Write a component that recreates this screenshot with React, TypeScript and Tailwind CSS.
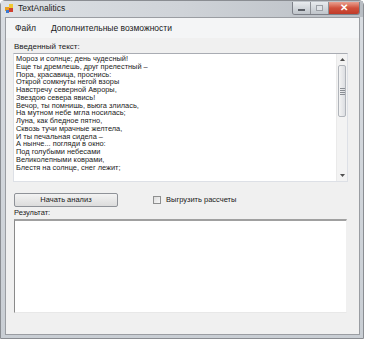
import React from 'react';

const poem = [
  'Мороз и солнце; день чудесный!',
  'Еще ты дремлешь, друг прелестный –',
  'Пора, красавица, проснись:',
  'Открой сомкнуты негой взоры',
  'Навстречу северной Авроры,',
  'Звездою севера явись!',
  'Вечор, ты помнишь, вьюга злилась,',
  'На мутном небе мгла носилась;',
  'Луна, как бледное пятно,',
  'Сквозь тучи мрачные желтела,',
  'И ты печальная сидела –',
  'А нынче... погляди в окно:',
  'Под голубыми небесами',
  'Великолепными коврами,',
  'Блестя на солнце, снег лежит;',
];

function AppIcon() {
  return (
    <svg width="9" height="9" viewBox="0 0 9 9">
      <rect x="0" y="3" width="4" height="4" fill="#e8a020" />
      <rect x="4" y="0" width="4" height="4" fill="#f0c830" />
      <rect x="4" y="4" width="4" height="4" fill="#d04030" />
      <rect x="1" y="6" width="3" height="3" fill="#3a78d0" />
    </svg>
  );
}

function TitleButtons() {
  return (
    <div className="flex h-[13px] mt-[1px] rounded-b-[3px] border border-t-0 border-[#7d8088] overflow-hidden">
      <div className="w-[18px] h-full flex items-center justify-center bg-gradient-to-b from-[#e8ebee] to-[#bfc4ca] border-r border-[#8d9096]">
        <div className="w-[7px] h-[2px] bg-white border border-[#5b5f66] mt-[3px]" />
      </div>
      <div className="w-[18px] h-full flex items-center justify-center bg-gradient-to-b from-[#e8ebee] to-[#bfc4ca] border-r border-[#8d9096]">
        <div className="w-[7px] h-[6px] border border-[#9ca0a6] bg-[#dfe2e6]" />
      </div>
      <div className="w-[30px] h-full flex items-center justify-center bg-gradient-to-b from-[#e8a090] via-[#d0503c] to-[#c03a28]">
        <span className="text-white text-[10px] font-bold leading-none [font-family:'Liberation_Sans',sans-serif]">✕</span>
      </div>
    </div>
  );
}

function ScrollBar() {
  return (
    <div className="w-[11px] h-full flex flex-col bg-[#f3f3f3] border-l border-[#eaeaea]">
      <div className="h-[11px] flex items-center justify-center">
        <svg width="5" height="3" viewBox="0 0 5 3"><path d="M0 3 L2.5 0 L5 3 Z" fill="#505050" /></svg>
      </div>
      <div className="mx-[1px] h-[52px] rounded-[2px] border border-[#b0b4ba] bg-gradient-to-r from-[#f4f4f4] to-[#dcdee2] flex flex-col items-center justify-center gap-[1px]">
        <div className="w-[5px] h-[1px] bg-[#8a8e94]" />
        <div className="w-[5px] h-[1px] bg-[#8a8e94]" />
        <div className="w-[5px] h-[1px] bg-[#8a8e94]" />
        <div className="w-[5px] h-[1px] bg-[#8a8e94]" />
      </div>
      <div className="flex-1" />
      <div className="h-[11px] flex items-center justify-center">
        <svg width="5" height="3" viewBox="0 0 5 3"><path d="M0 0 L2.5 3 L5 0 Z" fill="#505050" /></svg>
      </div>
    </div>
  );
}

export default function App() {
  return (
    <div className="w-[365px] h-[344px] bg-white [font-family:'Liberation_Sans',Arial,sans-serif] text-[#1a1a1a]">
      <div className="w-[364px] h-[339px] flex flex-col border border-[#8a8d92] rounded-t-[5px] bg-gradient-to-b from-[#d9dde2] to-[#c9ced4]">
        {/* title bar */}
        <div className="h-[16px] flex items-start pl-[4px] pr-[3px] bg-gradient-to-r from-[#dde1e5] via-[#cfd3d8] to-[#b9bec4]">
          <div className="mt-[3px]"><AppIcon /></div>
          <span className="ml-[4px] mt-[2px] text-[8.5px] leading-[10px] text-[#222]">TextAnalitics</span>
          <div className="flex-1" />
          <TitleButtons />
        </div>
        {/* client */}
        <div className="flex-1 mx-[3px] mb-[3px] ml-[4px] bg-[#f0f0f0] border border-[#9a9da2] flex flex-col">
          <div className="h-[20px] flex items-center pl-[9px] gap-[15px] text-[8.5px] bg-[#f4f5f6]">
            <span>Файл</span>
            <span>Дополнительные возможности</span>
          </div>
          <div className="pl-[8px] mt-[4px] text-[8px] leading-[10px]">Введенный текст:</div>
          <div className="ml-[7px] mt-[1px] w-[335px] h-[129px] bg-white border border-[#dde0e6] border-t-[#a9acb3] flex">
            <div className="flex-1 pl-[2px] pt-[1px] text-[7.4px] leading-[7.75px] text-[#222]">
              {poem.map((l) => (
                <div key={l} className="whitespace-nowrap">{l}</div>
              ))}
            </div>
            <ScrollBar />
          </div>
          <div className="flex items-center mt-[11px] ml-[8px] h-[14px]">
            <div className="w-[104px] h-[14px] rounded-[2px] border border-[#8f9298] bg-gradient-to-b from-[#f3f3f3] to-[#dcdcdc] flex items-center justify-center text-[7.5px]">
              Начать анализ
            </div>
            <div className="ml-[35px] w-[8px] h-[8px] border border-[#8e8f8f] bg-gradient-to-br from-[#dcdcdc] to-[#f8f8f8]" />
            <span className="ml-[5px] text-[7.5px]">Выгрузить рассчеты</span>
          </div>
          <div className="pl-[8px] mt-[1px] text-[7.5px] leading-[10px]">Результат:</div>
          <div className="ml-[8px] mt-[1px] w-[333px] h-[94px] bg-white border-t-2 border-l border-t-[#a0a0a0] border-l-[#8a8a8a] border-r border-b border-r-[#f0f0f0] border-b-[#e8e8e8]" />
        </div>
      </div>
    </div>
  );
}
